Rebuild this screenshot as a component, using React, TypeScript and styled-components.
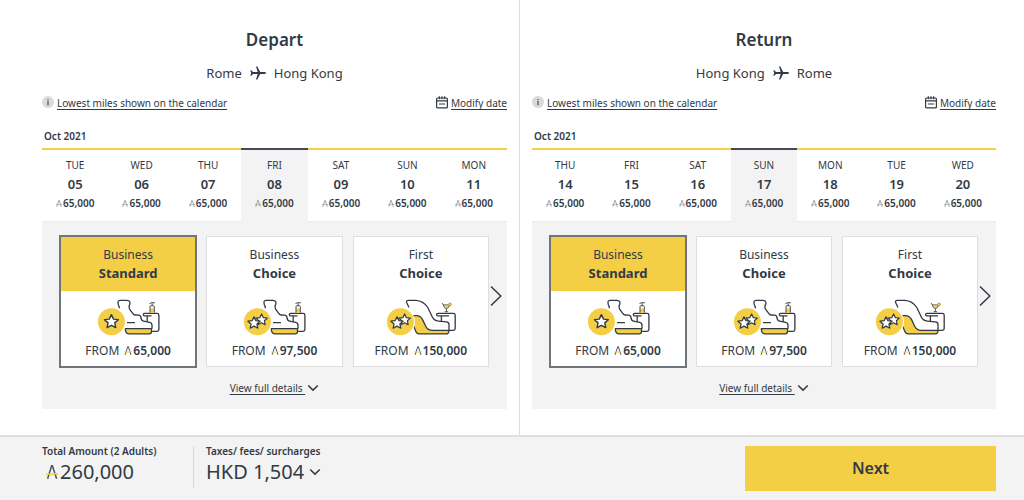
import React, { useState } from "react";
import styled, { createGlobalStyle, css } from "styled-components";

const ink = "#323a45";
const gold = "#f4ce45";
const grey = "#f3f3f3";

const GlobalStyle = createGlobalStyle`
  *, *::before, *::after { box-sizing: border-box; }
  html, body, #root { height: 100%; }
  body {
    margin: 0;
    background: #fff;
    color: ${ink};
    font-family: "Noto Sans", "Open Sans", sans-serif;
    font-size: 12px;
  }
  button { font: inherit; color: inherit; background: none; border: 0; padding: 0; margin: 0; cursor: pointer; }
  svg { display: block; flex: none; }
`;

const Page = styled.div`
  min-height: 100%;
  display: flex;
  flex-direction: column;
`;

const Journeys = styled.main`
  flex: 1;
  display: grid;
  grid-template-columns: 1fr 1fr;
  padding: 0 28px 0 42px;
`;

const Journey = styled.section<{ $divided?: boolean }>`
  padding: ${(p) => (p.$divided ? "28px 0 26px 12px" : "28px 12px 26px 0")};
  border-left: ${(p) => (p.$divided ? "1px solid #dcdcdc" : "0")};
  min-width: 0;
`;

const Title = styled.h2`
  margin: 0;
  font-size: 17px;
  line-height: 24px;
  font-weight: 600;
  text-align: center;
`;

const Route = styled.p`
  display: flex;
  justify-content: center;
  align-items: center;
  gap: 8px;
  margin: 11px 0 0;
  font-size: 13px;
  line-height: 20px;
`;

const Tools = styled.div`
  display: flex;
  justify-content: space-between;
  margin-top: 12px;
`;

const Tool = styled.a`
  display: flex;
  align-items: center;
  gap: 3px;
  color: inherit;
  font-size: 10px;
  line-height: 16px;
  text-decoration: none;
  span { text-decoration: underline; text-underline-offset: 2px; }
`;

const Month = styled.h3`
  margin: 17px 0 0;
  padding-left: 2px;
  font-size: 10px;
  line-height: 16px;
  font-weight: 600;
`;

const Days = styled.div`
  display: grid;
  grid-template-columns: repeat(7, 1fr);
  margin-top: 4px;
`;

const Day = styled.button<{ $on: boolean }>`
  display: flex;
  flex-direction: column;
  align-items: center;
  height: 74px;
  padding-top: 7px;
  border-top: 2px solid ${(p) => (p.$on ? "#474b58" : gold)};
  border-bottom: 1px solid ${(p) => (p.$on ? grey : "#ececec")};
  background: ${(p) => (p.$on ? grey : "#fff")};
`;

const DayName = styled.span`
  font-size: 10px;
  line-height: 16px;
`;

const DayNumber = styled.span`
  margin-top: 2px;
  font-size: 13px;
  line-height: 18px;
  font-weight: 600;
`;

const DayPrice = styled.span`
  display: flex;
  align-items: center;
  gap: 1px;
  margin-top: 2px;
  font-size: 10px;
  line-height: 16px;
  font-weight: 600;
`;

const Panel = styled.div`
  display: flex;
  flex-direction: column;
  align-items: center;
  padding: 14px 0 13px;
  background: ${grey};
`;

const Carousel = styled.div`
  align-self: stretch;
  display: flex;
  align-items: flex-start;
  padding-left: 18px;
`;

const Cards = styled.div`
  flex: 1;
  display: grid;
  grid-template-columns: repeat(3, 1fr);
  gap: 10px;
`;

const Card = styled.button<{ $on: boolean }>`
  display: flex;
  flex-direction: column;
  height: 131px;
  background: #fff;
  border: 1px solid #dedede;
  ${(p) =>
    p.$on &&
    css`
      border-color: #6e757b;
      box-shadow: 0 0 0 1px #6e757b;
    `}
`;

const CardHead = styled.span<{ $on: boolean }>`
  align-self: stretch;
  display: flex;
  flex-direction: column;
  align-items: center;
  height: 54px;
  padding-top: 9px;
  font-size: 12px;
  line-height: 17px;
  background: ${(p) => (p.$on ? gold : "transparent")};
  strong { font-size: 13px; line-height: 20px; font-weight: 700; }
`;

const CardBody = styled.span`
  align-self: stretch;
  display: flex;
  flex-direction: column;
  align-items: center;
  gap: 5px;
  padding-top: 8px;
`;

const Fare = styled.span`
  display: flex;
  align-items: center;
  font-size: 12px;
  line-height: 17px;
  gap: 1px;
  svg { margin-left: 4px; }
  b { font-weight: 600; }
`;

const NextFares = styled.button`
  display: flex;
  align-items: center;
  width: 18px;
  height: 120px;
`;

const Details = styled.a`
  display: flex;
  align-items: center;
  gap: 2px;
  margin-top: 13px;
  color: inherit;
  font-size: 10px;
  line-height: 16px;
  text-decoration: none;
  span { text-decoration: underline; text-underline-offset: 2px; white-space: pre; }
`;

const Summary = styled.footer`
  display: flex;
  align-items: flex-start;
  height: 65px;
  padding: 9px 28px 9px 42px;
  background: ${grey};
  border-top: 2px solid #e0e0e0;
`;

const Total = styled.div<{ $divided?: boolean }>`
  height: 42px;
  ${(p) =>
    p.$divided &&
    css`
      width: 152px;
      margin-right: 12px;
      border-right: 1px solid #d8d8d8;
    `}
`;

const TotalLabel = styled.div`
  font-size: 10px;
  line-height: 10px;
  font-weight: 600;
  white-space: nowrap;
`;

const TotalValue = styled.div`
  display: flex;
  align-items: center;
  gap: 2px;
  margin-top: 3px;
  font-size: 20px;
  line-height: 26px;
  > svg { margin-left: 4px; }
`;

const Disclosure = styled.button`
  display: flex;
  align-items: center;
  gap: 5px;
`;

const NextButton = styled.button`
  width: 251px;
  height: 45px;
  margin-left: auto;
  padding-bottom: 2px;
  background: ${gold};
  font-size: 16px;
  font-weight: 600;
`;

function Miles({ size, muted }: { size: number; muted?: boolean }) {
  return (
    <svg width={size} height={Math.round((size * 7) / 6)} viewBox="0 0 12 14" fill="none" aria-hidden="true">
      <path d="M1.600 13.700 5.700.8h.7l4.200 12.900" stroke={muted ? "#858b8f" : "#4b5259"} strokeWidth="1.500" />
      <path d="M0 9.800c2.400-2.200 4.200.4 6.600-.5 1.800-.7 3.600-1 5.400-.1" stroke={muted ? "#9aa09f" : gold} strokeWidth="1.600" />
    </svg>
  );
}

function Plane() {
  return (
    <svg width="16" height="14" viewBox="0 0 16 14" fill={ink} aria-hidden="true">
      <path d="M16 7c0 .6-.8.9-1.600.9h-4.200L7.300 13.600H6L7.700 7.900H3L1.300 9.800H.3L1.200 7 .3 4.200h1L3 6.100h4.700L6 .4h1.300l2.900 5.700h4.200c.8 0 1.600.3 1.600.9Z" />
    </svg>
  );
}

function Info() {
  return (
    <svg width="12" height="16" viewBox="0 0 12 16" aria-hidden="true">
      <circle cx="6" cy="7" r="6" fill="#d9dadb" />
      <path d="M5.400 3.900h1.200v1.300H5.400zM5.400 6.100h1.200v4.100H5.400z" fill="#454c55" />
    </svg>
  );
}

function CalendarIcon() {
  return (
    <svg width="12" height="16" viewBox="0 0 12 16" fill="none" stroke={ink} strokeWidth="1.200" aria-hidden="true">
      <path d="M1.600 3h8.800q1 0 1 1v7.900q0 1-1 1H1.600q-1 0-1-1V4q0-1 1-1ZM.6 5.900h10.800M3.300 1.200v3M6 1.200v3M8.700 1.200v3M2.900 9h6.200" />
    </svg>
  );
}

function Chevron() {
  return (
    <svg width="12" height="8" viewBox="0 0 12 8" fill="none" stroke={ink} strokeWidth="1.500" aria-hidden="true">
      <path d="m1.200 1.500 4.800 4.600 4.800-4.600" />
    </svg>
  );
}

const starPath = "M0-6.500 2-2.400 6.400-1.900 3.100 1.100 4 5.500 0 3.300-4 5.500-3.100 1.100-6.400-1.900-2-2.400Z";

function Badge({ stars }: { stars: number }) {
  return (
    <g>
      <circle cx="14.400" cy="22.700" r="14.500" fill="#fff" stroke="none" />
      <circle cx="14.400" cy="22.700" r="13.500" fill={gold} stroke="none" />
      <g fill="#fff" strokeLinejoin="round">
        {stars === 1 ? (
          <path d={starPath} transform="translate(14.400 22.700) scale(1.080)" />
        ) : (
          <>
            <path d={starPath} transform="translate(18.600 20.800) scale(.9)" />
            <path d={starPath} transform="translate(11 24) scale(.95)" />
          </>
        )}
      </g>
    </g>
  );
}

function BusinessSeat({ stars }: { stars: number }) {
  return (
    <svg width="63" height="38" viewBox="0 0 63 38" fill="none" stroke={ink} strokeWidth="1.300" strokeLinejoin="round" aria-hidden="true">
      <path d="M28.300 29.700H54.500V32.500q0 2.400-2.400 2.400H32.500q-4.200 0-4.200-5.200Z" fill={gold} />
      <path d="M22.600 9.300 21.200 5.200Q20.300 1.400 23 1.300h6.800q3.300 0 3.200 3.400-1.800 2.800-.6 5.200l3.100 4.200q.8 1.800 2.600 1.900l3.400.2q2.400.2 2.500 2.400.2 3 2.500 3.500l6.300 1.300q2.200.5 2.200 2.800v3.500M30 23.700h8" />
      <path d="M54.500 16.800h-7q-1.200 0-1.200-1.200t1.200-1.200h12.600q1.800 0 1.800 1.800v14.300q0 1.800-1.800 1.800h-5M50.200 17v5.700" />
      <path d="M53 9.500h4.300v4.200H53Z" fill={gold} stroke="none" />
      <path d="M53 13.600V7.700q0-1 1-1h2.300q1 0 1 1v5.900M55.200 6.500V4.200M52.500 4.500q2.600-1.600 5.400-.6" strokeWidth=".9" />
      <Badge stars={stars} />
    </svg>
  );
}

function FirstSeat() {
  return (
    <svg width="70" height="38" viewBox="0 0 70 38" fill="none" stroke={ink} strokeWidth="1.300" strokeLinejoin="round" aria-hidden="true">
      <path d="M27 16.700h3.500q4.300.2 6.200 4.200l3 6.300q2 4.100 7 4.200H63q0 3.500-3.200 3.500H33.500q-2.800 0-3.800-2.800L27 26Z" fill={gold} />
      <path d="M23 8.500 20.600 3.500q-.6-2.200 1.900-2.200h7.300q7.700.4 12 7.200l4.500 9.500q1.800 3.700 6 4.100l8.200.7q2.500.3 2.500 2.800v5.800" />
      <path d="M63 16.800H51.800q-1.200 0-1.200-1.200t1.200-1.200h15.600q1.800 0 1.800 1.800v13.400q0 1.800-1.800 1.800H63M55.400 17v5.600" />
      <path d="M57.500 6.700h5.800l-2.900 2.900Z" fill={gold} stroke="none" />
      <path d="m56 4 1.300 1.900q.6 3.500 3.100 3.700 2.600-.2 3.100-3.700H57M60.400 9.600v3.200M58.600 12.700h3.600" strokeWidth=".8" />
      <circle cx="64" cy="5.400" r="1.400" stroke="#b99b32" strokeWidth=".9" fill={gold} />
      <Badge stars={2} />
    </svg>
  );
}

type Fares = { cabin: string; tier: string; price: string };

const fares: Fares[] = [
  { cabin: "Business", tier: "Standard", price: "65,000" },
  { cabin: "Business", tier: "Choice", price: "97,500" },
  { cabin: "First", tier: "Choice", price: "150,000" },
];

type LegProps = {
  title: string;
  from: string;
  to: string;
  days: [string, string][];
  divided?: boolean;
};

function Leg({ title, from, to, days, divided }: LegProps) {
  const [day, setDay] = useState(3);
  const [fare, setFare] = useState(0);
  return (
    <Journey $divided={divided}>
      <Title>{title}</Title>
      <Route>
        <span>{from}</span>
        <Plane />
        <span>{to}</span>
      </Route>
      <Tools>
        <Tool href="#lowest">
          <Info />
          <span>Lowest miles shown on the calendar</span>
        </Tool>
        <Tool href="#modify">
          <CalendarIcon />
          <span>Modify date</span>
        </Tool>
      </Tools>
      <Month>Oct 2021</Month>
      <Days>
        {days.map(([name, number], i) => (
          <Day key={number} type="button" $on={i === day} aria-pressed={i === day} onClick={() => setDay(i)}>
            <DayName>{name}</DayName>
            <DayNumber>{number}</DayNumber>
            <DayPrice>
              <Miles size={6} muted />
              65,000
            </DayPrice>
          </Day>
        ))}
      </Days>
      <Panel>
        <Carousel>
          <Cards>
            {fares.map((f, i) => (
              <Card key={f.price} type="button" $on={i === fare} aria-pressed={i === fare} onClick={() => setFare(i)}>
                <CardHead $on={i === fare}>
                  {f.cabin}
                  <strong>{f.tier}</strong>
                </CardHead>
                <CardBody>
                  {f.cabin === "First" ? <FirstSeat /> : <BusinessSeat stars={f.tier === "Standard" ? 1 : 2} />}
                  <Fare>
                    FROM
                    <Miles size={8} />
                    <b>{f.price}</b>
                  </Fare>
                </CardBody>
              </Card>
            ))}
          </Cards>
          <NextFares type="button" aria-label="More fares">
            <svg width="14" height="22" viewBox="0 0 14 22" fill="none" stroke={ink} strokeWidth="1.500" aria-hidden="true">
              <path d="m2 1.500 9.800 9.500L2 20.500" />
            </svg>
          </NextFares>
        </Carousel>
        <Details href="#details">
          <span>{"View full details "}</span>
          <Chevron />
        </Details>
      </Panel>
    </Journey>
  );
}

export default function App() {
  return (
    <Page>
      <GlobalStyle />
      <Journeys>
        <Leg
          title="Depart"
          from="Rome"
          to="Hong Kong"
          days={[["TUE", "05"], ["WED", "06"], ["THU", "07"], ["FRI", "08"], ["SAT", "09"], ["SUN", "10"], ["MON", "11"]]}
        />
        <Leg
          divided
          title="Return"
          from="Hong Kong"
          to="Rome"
          days={[["THU", "14"], ["FRI", "15"], ["SAT", "16"], ["SUN", "17"], ["MON", "18"], ["TUE", "19"], ["WED", "20"]]}
        />
      </Journeys>
      <Summary>
        <Total $divided>
          <TotalLabel>Total Amount (2 Adults)</TotalLabel>
          <TotalValue>
            <Miles size={12} />
            260,000
          </TotalValue>
        </Total>
        <Total>
          <TotalLabel>Taxes/ fees/ surcharges</TotalLabel>
          <TotalValue>
            <Disclosure type="button">
              HKD 1,504
              <Chevron />
            </Disclosure>
          </TotalValue>
        </Total>
        <NextButton type="button">Next</NextButton>
      </Summary>
    </Page>
  );
}
